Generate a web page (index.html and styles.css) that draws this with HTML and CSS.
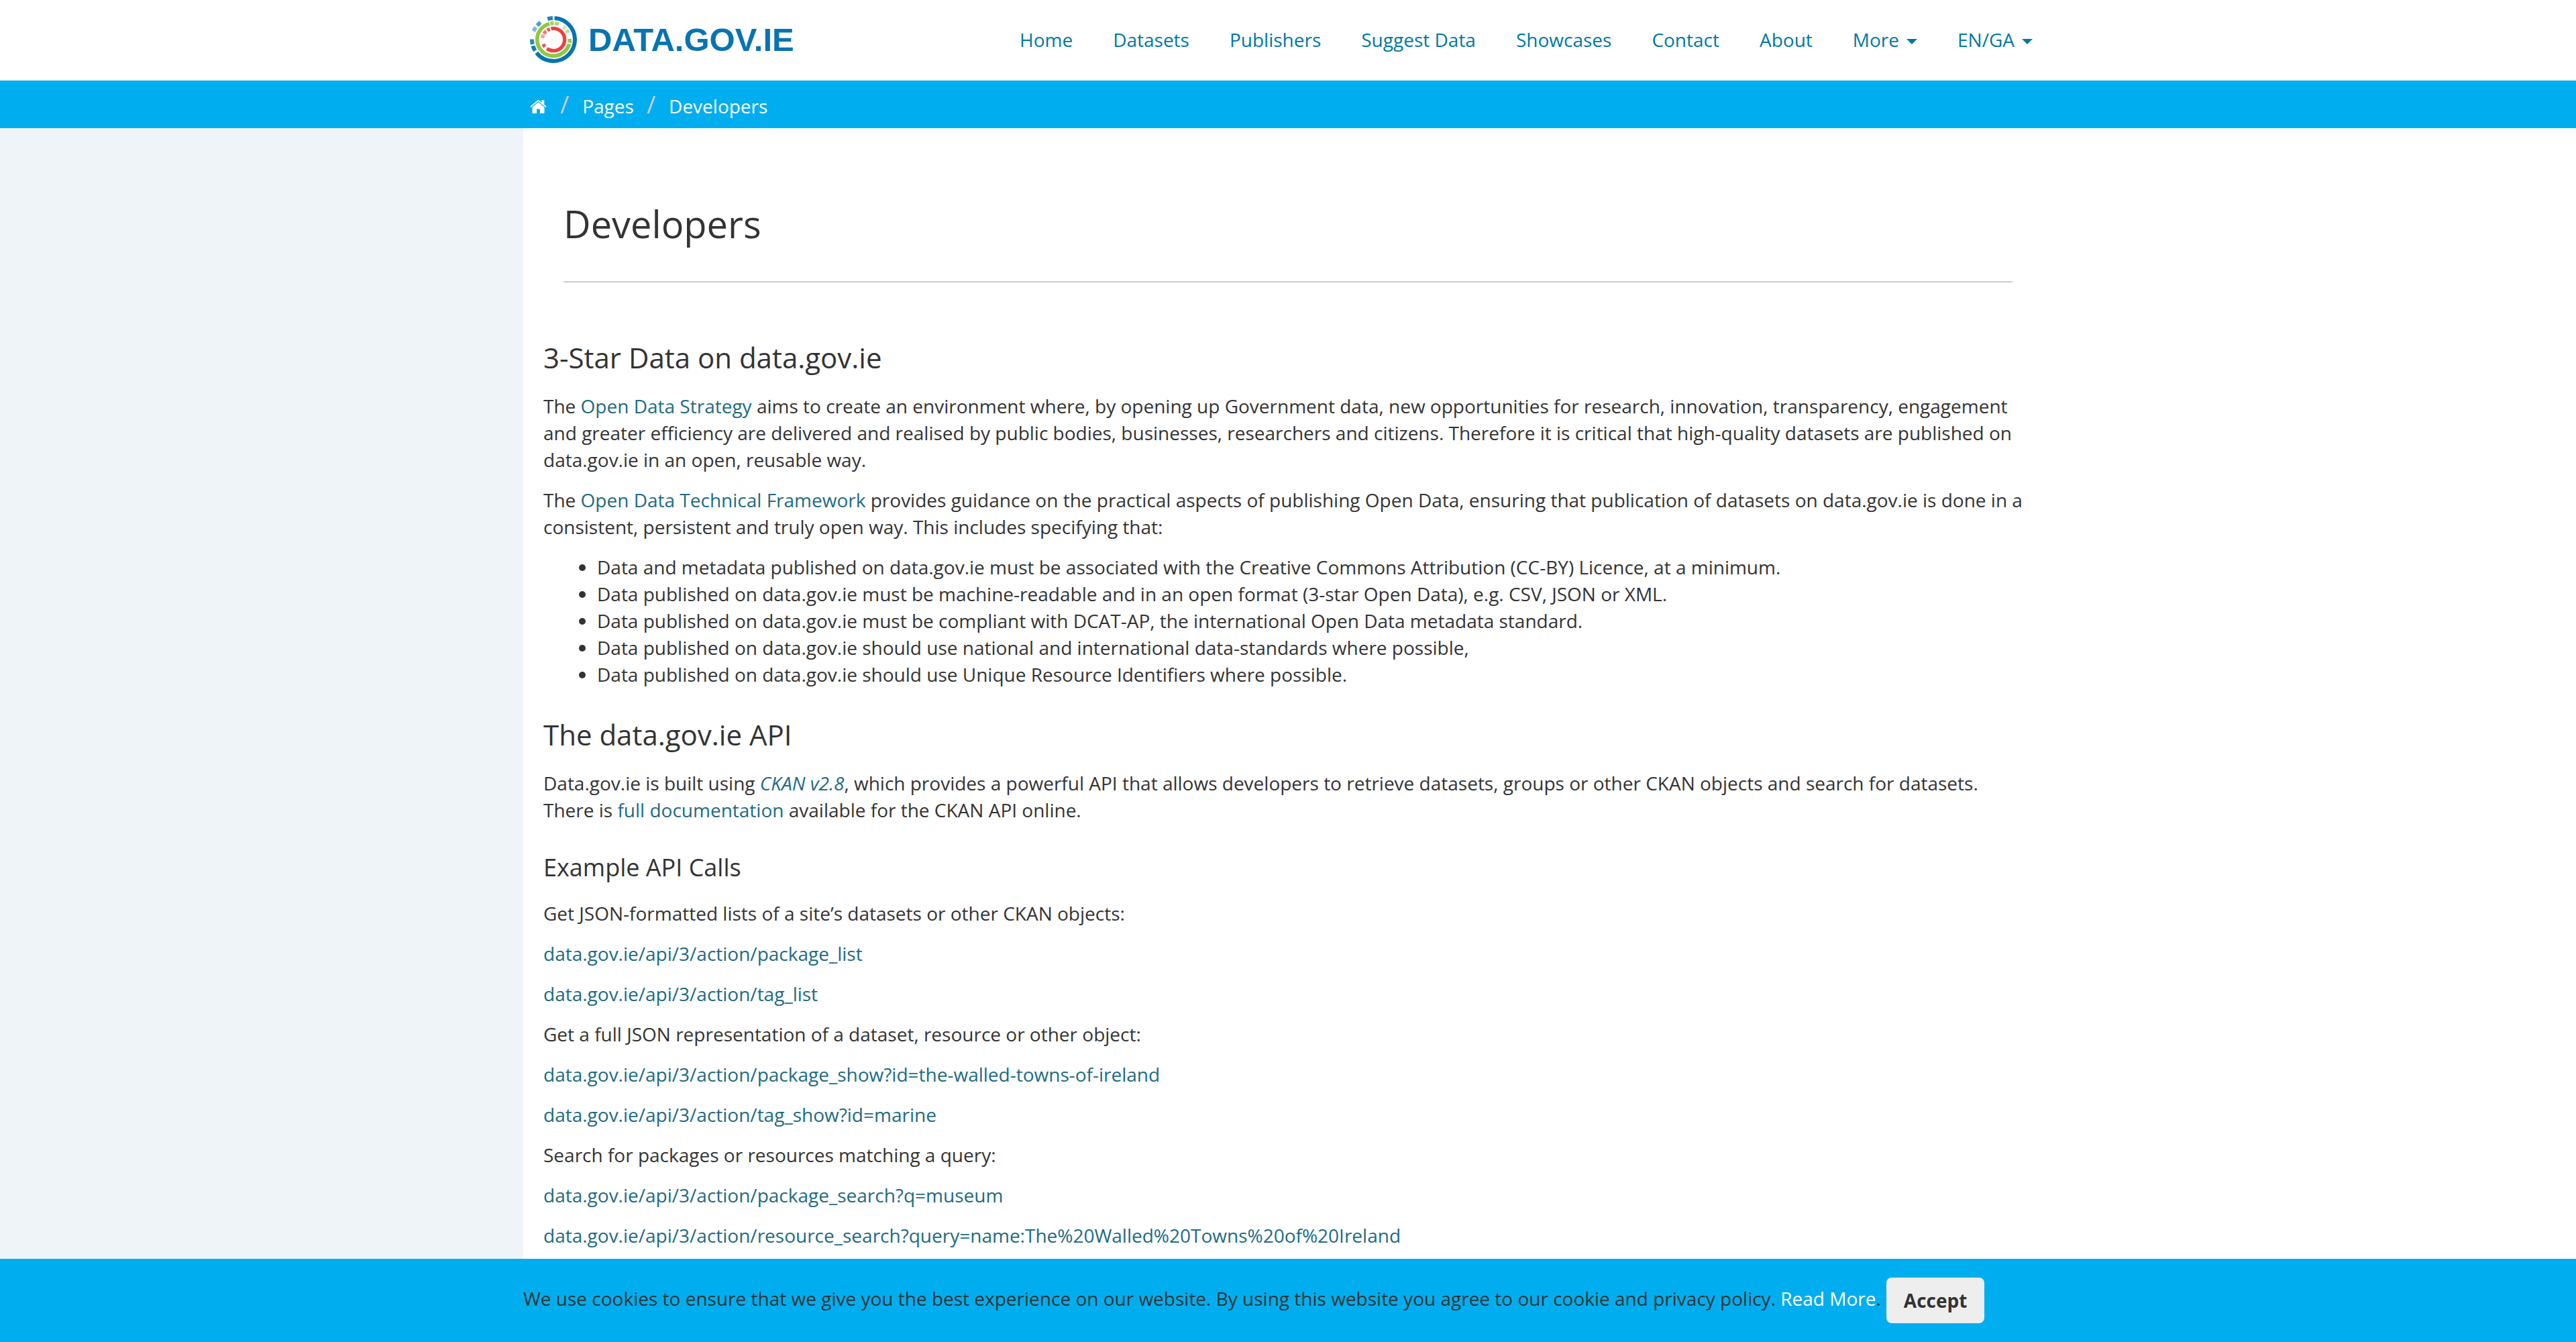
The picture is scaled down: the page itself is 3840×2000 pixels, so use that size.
FILE: index.html
```html
<!DOCTYPE html>
<html lang="en">
<head>
<meta charset="utf-8">
<title>Developers - data.gov.ie</title>
<link rel="stylesheet" href="styles.css">
</head>
<body>
<header class="masthead">
  <div class="container masthead-inner">
    <a class="logo" href="#" aria-label="data.gov.ie">
      <svg class="logo-mark" viewBox="0 0 210 210" aria-hidden="true">
        <g fill="none" transform="rotate(-90 105 105)">
          <g stroke="#0874b1" stroke-width="18">
            <circle cx="105" cy="105" r="96" pathLength="360" stroke-dasharray="229 131" stroke-dashoffset="-3"/>
            <circle cx="105" cy="105" r="96" pathLength="360" stroke-dasharray="14 346" stroke-dashoffset="-239" opacity=".95"/>
            <circle cx="105" cy="105" r="96" pathLength="360" stroke-dasharray="14 346" stroke-dashoffset="-257" opacity=".85"/>
            <circle cx="105" cy="105" r="96" pathLength="360" stroke-dasharray="12 348" stroke-dashoffset="-293" opacity=".5"/>
            <circle cx="105" cy="105" r="96" pathLength="360" stroke-dasharray="12 348" stroke-dashoffset="-311" opacity=".7"/>
            <circle cx="105" cy="105" r="96" pathLength="360" stroke-dasharray="14 346" stroke-dashoffset="-344" opacity=".9"/>
          </g>
          <g stroke="#8fc842" stroke-width="17">
            <circle cx="105" cy="105" r="73" pathLength="360" stroke-dasharray="239 121" stroke-dashoffset="-105"/>
            <circle cx="105" cy="105" r="73" pathLength="360" stroke-dasharray="14 346" stroke-dashoffset="-347" opacity=".85"/>
            <circle cx="105" cy="105" r="73" pathLength="360" stroke-dasharray="14 346" stroke-dashoffset="-5" opacity=".7"/>
            <circle cx="105" cy="105" r="73" pathLength="360" stroke-dasharray="12 348" stroke-dashoffset="-36" opacity=".4"/>
            <circle cx="105" cy="105" r="73" pathLength="360" stroke-dasharray="12 348" stroke-dashoffset="-53" opacity=".6"/>
            <circle cx="105" cy="105" r="73" pathLength="360" stroke-dasharray="14 346" stroke-dashoffset="-87" opacity=".95"/>
          </g>
          <g stroke="#ee4040" stroke-width="16">
            <circle cx="105" cy="105" r="50" pathLength="360" stroke-dasharray="229 131" stroke-dashoffset="-346"/>
            <circle cx="105" cy="105" r="50" pathLength="360" stroke-dasharray="16 344" stroke-dashoffset="-229" opacity=".9"/>
            <circle cx="105" cy="105" r="50" pathLength="360" stroke-dasharray="18 342" stroke-dashoffset="-277" opacity=".5"/>
            <circle cx="105" cy="105" r="50" pathLength="360" stroke-dasharray="18 342" stroke-dashoffset="-300" opacity=".7"/>
            <circle cx="105" cy="105" r="50" pathLength="360" stroke-dasharray="16 344" stroke-dashoffset="-324" opacity=".85"/>
          </g>
        </g>
      </svg>
      <span class="logo-text">DATA.GOV.IE</span>
    </a>
    <nav class="main-nav" aria-label="Main">
      <a href="#">Home</a>
      <a href="#">Datasets</a>
      <a href="#">Publishers</a>
      <a href="#">Suggest Data</a>
      <a href="#">Showcases</a>
      <a href="#">Contact</a>
      <a href="#">About</a>
      <a href="#" class="has-menu">More</a>
      <a href="#" class="has-menu">EN/GA</a>
    </nav>
  </div>
</header>
<nav class="toolbar" aria-label="Breadcrumb">
  <ol class="container breadcrumb">
    <li><a href="#" aria-label="Home"><svg class="home-icon" viewBox="0 0 26 21" aria-hidden="true"><path fill="#fff" d="M12.500 4.300 21.500 11.700V20Q21.500 21 20.500 21H15V14.500H10V21H4.500Q3.500 21 3.500 20V11.700ZM1.300 11.900.3 10.700 11.300 1.500Q12.500.7 13.700 1.500L17.500 4.700V1.300H21.300V7.800L24.700 10.700 23.700 11.900 12.500 2.700Z"/></svg></a></li>
    <li><a href="#">Pages</a></li>
    <li><a href="#">Developers</a></li>
  </ol>
</nav>
<div class="page">
  <main class="container content">
    <div class="page-heading">
      <h1>Developers</h1>
    </div>
    <h2>3-Star Data on data.gov.ie</h2>
    <p>The <a href="#">Open Data Strategy</a> aims to create an environment where, by opening up Government data, new opportunities for research, innovation, transparency, engagement and greater efficiency are delivered and realised by public bodies, businesses, researchers and citizens. Therefore it is critical that high-quality datasets are published on data.gov.ie in an open, reusable way.</p>
    <p>The <a href="#">Open Data Technical Framework</a> provides guidance on the practical aspects of publishing Open Data, ensuring that publication of datasets on data.gov.ie is done in a consistent, persistent and truly open way. This includes specifying that:</p>
    <ul>
      <li>Data and metadata published on data.gov.ie must be associated with the Creative Commons Attribution (CC-BY) Licence, at a minimum.</li>
      <li>Data published on data.gov.ie must be machine-readable and in an open format (3-star Open Data), e.g. CSV, JSON or XML.</li>
      <li>Data published on data.gov.ie must be compliant with DCAT-AP, the international Open Data metadata standard.</li>
      <li>Data published on data.gov.ie should use national and international data-standards where possible,</li>
      <li>Data published on data.gov.ie should use Unique Resource Identifiers where possible.</li>
    </ul>
    <h2>The data.gov.ie API</h2>
    <p>Data.gov.ie is built using <a href="#"><em>CKAN v2.8</em></a>, which provides a powerful API that allows developers to retrieve datasets, groups or other CKAN objects and search for datasets. There is <a href="#">full documentation</a> available for the CKAN API online.</p>
    <h3>Example API Calls</h3>
    <p>Get JSON-formatted lists of a site’s datasets or other CKAN objects:</p>
    <p><a href="#">data.gov.ie/api/3/action/package_list</a></p>
    <p><a href="#">data.gov.ie/api/3/action/tag_list</a></p>
    <p>Get a full JSON representation of a dataset, resource or other object:</p>
    <p><a href="#">data.gov.ie/api/3/action/package_show?id=the-walled-towns-of-ireland</a></p>
    <p><a href="#">data.gov.ie/api/3/action/tag_show?id=marine</a></p>
    <p>Search for packages or resources matching a query:</p>
    <p><a href="#">data.gov.ie/api/3/action/package_search?q=museum</a></p>
    <p><a href="#">data.gov.ie/api/3/action/resource_search?query=name:The%20Walled%20Towns%20of%20Ireland</a></p>
  </main>
</div>
<div class="cookie-bar">
  <div class="container cookie-inner">
    <span class="cookie-text">We use cookies to ensure that we give you the best experience on our website. By using this website you agree to our cookie and privacy policy. <a href="#">Read More</a>.</span>
    <button type="button">Accept</button>
  </div>
</div>
</body>
</html>
```
FILE: styles.css
```css
* {
  box-sizing: border-box;
}

body {
  margin: 0;
  background: #fff;
  color: #333;
  font: 28px/40px "Open Sans", sans-serif;
}

a {
  color: #206b82;
  text-decoration: none;
}

.container {
  width: 100%;
  max-width: 2280px;
  margin: 0 auto;
}

.masthead-inner {
  display: flex;
  align-items: center;
  justify-content: space-between;
  height: 120px;
  padding: 0 30px 2px 10px;
}

.logo {
  display: flex;
  align-items: center;
  gap: 17px;
}

.logo-mark {
  width: 70px;
  height: 70px;
}

.logo-text {
  color: #0874b1;
  font: bold 49px/70px "Liberation Sans", sans-serif;
}

.main-nav {
  display: flex;
  gap: 60px;
}

.main-nav a {
  color: #0078a4;
}

.has-menu::after {
  content: "";
  display: inline-block;
  margin-left: 11px;
  border: 8px solid transparent;
  border-top-color: currentColor;
  border-bottom: 0;
  vertical-align: 4px;
}

.toolbar {
  background: #00aef0;
}

.breadcrumb {
  display: flex;
  padding: 18px 10px 13px;
  list-style: none;
}

.breadcrumb a {
  color: #fff;
}

.breadcrumb li + li::before {
  content: "/";
  margin: 0 20px 0 19px;
  color: #ccc;
  font-size: 36px;
  line-height: 1;
}

.home-icon {
  width: 26px;
  height: 21px;
}

.page {
  background: linear-gradient(to right, #eff4f8 50%, #fff 50%);
}

.content {
  padding: 100px 30px 120px;
  background: #fff;
}

.page-heading {
  margin: 0 30px 84px;
  padding-bottom: 44px;
  border-bottom: 2px solid #ccc;
}

h1,
h2,
h3 {
  margin: 42px 0 24px;
  font-weight: 400;
}

h1 {
  margin: 0;
  font-size: 56px;
  line-height: 84px;
}

h2 {
  font-size: 42px;
  line-height: 56px;
}

h3 {
  font-size: 36px;
  line-height: 48px;
}

p {
  margin: 0 0 20px;
}

ul {
  margin: 0 0 20px;
  padding-left: 80px;
}

.cookie-bar {
  position: fixed;
  right: 0;
  bottom: 0;
  left: 0;
  background: #00aef0;
}

.cookie-inner {
  display: flex;
  align-items: center;
  gap: 8px;
  padding: 28px 0;
}

.cookie-text {
  padding-bottom: 6px;
}

.cookie-inner a {
  color: #fff;
}

.cookie-inner button {
  padding: 14px 26px;
  border: 0;
  border-radius: 8px;
  background: #eee;
  color: #333;
  font: bold 28px/40px "Open Sans", sans-serif;
}
```
